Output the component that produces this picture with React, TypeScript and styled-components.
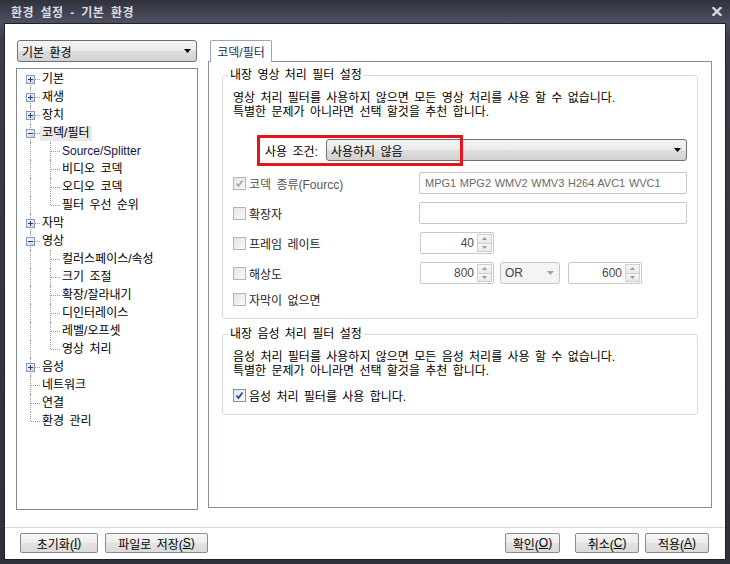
import React from 'react';
import styled, { createGlobalStyle, css } from 'styled-components';

const GlobalStyle = createGlobalStyle`
  html, body { margin: 0; padding: 0; background: #2b2d35; }
  body {
    font-family: "Liberation Sans", "Noto Sans CJK KR", sans-serif;
    font-size: 12px;
    word-spacing: 2px;
    color: #000;
  }
  * { box-sizing: border-box; }
`;

const Window = styled.div`
  width: 730px;
  height: 564px;
  display: flex;
  flex-direction: column;
  padding: 0 4px 4px 4px;
  background: linear-gradient(#30323b 0px, #4c4f60 22px, #3a3c47 40px, #2f3139 100%);
`;

const TitleBar = styled.div`
  height: 23px;
  display: flex;
  align-items: center;
  justify-content: space-between;
  padding: 0 4px 1px 7px;
`;

const TitleText = styled.div`
  color: #dcdde2;
  font-weight: bold;
  font-size: 12px;
  letter-spacing: 0.4px;
  word-spacing: 3px;
`;

const Body = styled.div`
  flex: 1;
  display: flex;
  flex-direction: column;
  background: #fff;
  border: 1px solid #1f2026;
`;

const Main = styled.div`
  height: 503px;
  display: flex;
  gap: 10px;
  padding: 16px 13px 17px 11px;
`;

const LeftColumn = styled.div`
  width: 182px;
  display: flex;
  flex-direction: column;
`;

const ComboBox = styled.div<{ $disabled?: boolean; $width?: number }>`
  height: 22px;
  display: flex;
  align-items: center;
  justify-content: space-between;
  padding: 0 5px 0 4px;
  border: 1px solid #707070;
  border-radius: 3px;
  background: linear-gradient(#f3f3f3, #ebebeb 50%, #dddddd 51%, #d2d2d2);
  ${p => p.$width && css`width: ${p.$width}px;`}
  ${p => p.$disabled && css`
    border-color: #c6c6c6;
    background: #f4f4f4;
    color: #444;
  `}
`;

const LeftCombo = styled(ComboBox)`
  margin: 0 1px;
`;

const Tree = styled.div`
  flex: 1;
  margin-top: 6px;
  border: 1px solid #828790;
  padding: 1px 0 0 3px;
  display: flex;
  flex-direction: column;
`;

const TreeRow = styled.div`
  height: 18px;
  display: flex;
  align-items: center;
`;

type Vert = 'full' | 'top' | 'bottom' | 'none';

const GuideCell = styled.div<{ $vert: Vert; $horiz?: boolean }>`
  position: relative;
  width: 20px;
  height: 18px;
  display: flex;
  align-items: center;
  justify-content: center;
  &::before {
    content: '';
    position: absolute;
    left: 10px;
    width: 0;
    border-left: 1px dotted #9a9a9a;
    top: ${p => (p.$vert === 'bottom' ? '9px' : '0')};
    bottom: ${p => (p.$vert === 'top' ? '9px' : '0')};
    display: ${p => (p.$vert === 'none' ? 'none' : 'block')};
  }
  &::after {
    content: '';
    position: absolute;
    left: 11px;
    right: 0;
    top: 9px;
    border-top: 1px dotted #9a9a9a;
    display: ${p => (p.$horiz ? 'block' : 'none')};
  }
`;

const Expander = styled.svg`
  position: relative;
  z-index: 1;
  margin-left: 1px;
`;

const TreeLabel = styled.span<{ $selected?: boolean; $latin?: boolean }>`
  padding: 0 2px;
  height: 15px;
  line-height: 15px;
  white-space: nowrap;
  color: ${p => (p.$latin ? '#14144a' : '#000')};
  ${p => p.$selected && css`background: #e9e9e9;`}
`;

const RightColumn = styled.div`
  width: 504px;
  display: flex;
  flex-direction: column;
  padding-bottom: 2px;
`;

const TabStrip = styled.div`
  display: flex;
  padding-left: 2px;
`;

const Tab = styled.div`
  position: relative;
  z-index: 1;
  width: 62px;
  height: 22px;
  margin-bottom: -1px;
  border: 1px solid #9aa5bd;
  border-bottom: none;
  border-radius: 2px 2px 0 0;
  background: #fff;
  color: #22305e;
  display: flex;
  align-items: center;
  justify-content: center;
  font-size: 12px;
  word-spacing: 0;
`;

const TabPanel = styled.div`
  flex: 1;
  border: 1px solid #8d9097;
  padding: 6px 13px 0 13px;
`;

const Group = styled.fieldset<{ $mt: number; $pb: number }>`
  margin: ${p => p.$mt}px 0 0 0;
  padding: 0 10px ${p => p.$pb}px 10px;
  border: 1px solid #d3dbe4;
  border-radius: 3px;
  min-width: 0;
`;

const Legend = styled.legend`
  padding: 0 2px;
  margin-left: -5px;
  line-height: 15px;
`;

const Desc = styled.div`
  margin-top: 8px;
  line-height: 14px;
  white-space: nowrap;
`;

const UsageRow = styled.div`
  position: relative;
  margin-top: 20px;
  display: flex;
  align-items: center;
  gap: 4px;
  padding-left: 32px;
`;

const UsageLabel = styled.span`
  width: 57px;
  white-space: nowrap;
`;

const UsageCombo = styled(ComboBox)`
  flex: 1;
`;

const Highlight = styled.div`
  position: absolute;
  left: 24px;
  top: -4px;
  width: 206px;
  height: 31px;
  border: 3px solid #e8141c;
  pointer-events: none;
`;

const FormGrid = styled.div`
  margin-top: 11px;
  display: grid;
  grid-template-columns: 186px 1fr;
  row-gap: 8px;
  align-items: center;
`;

const CheckLabel = styled.label<{ $color?: string }>`
  display: flex;
  align-items: center;
  gap: 3px;
  height: 15px;
  color: ${p => p.$color || '#222'};
  white-space: nowrap;
`;

const Box = styled.span<{ $enabled?: boolean }>`
  width: 13px;
  height: 13px;
  flex: none;
  display: flex;
  align-items: center;
  justify-content: center;
  border: 1px solid ${p => (p.$enabled ? '#8295ad' : '#b4b4b4')};
  background: ${p => (p.$enabled ? 'linear-gradient(135deg, #dfe6ef, #fbfcfd)' : 'linear-gradient(135deg, #e4e4e4, #fafafa)')};
`;

const TextInput = styled.div`
  height: 22px;
  display: flex;
  align-items: center;
  padding: 0 5px;
  border: 1px solid #c8c8c8;
  border-radius: 2px;
  color: #6a6a6a;
  font-size: 11px;
  word-spacing: 0.6px;
  white-space: nowrap;
  overflow: hidden;
`;

const ControlRow = styled.div`
  display: flex;
  align-items: center;
  gap: 6px;
`;

const Spin = styled.div<{ $ml?: number }>`
  width: 74px;
  height: 22px;
  display: flex;
  border: 1px solid #c8c8c8;
  border-radius: 2px;
  margin-left: ${p => p.$ml ?? 0}px;
`;

const SpinValue = styled.div`
  flex: 1;
  display: flex;
  align-items: center;
  justify-content: flex-end;
  padding-right: 2px;
  color: #4a4a4a;
`;

const SpinButtons = styled.div`
  width: 15px;
  margin: 1px;
  display: flex;
  flex-direction: column;
`;

const SpinButton = styled.div`
  flex: 1;
  display: flex;
  align-items: center;
  justify-content: center;
  border: 1px solid #cfcfcf;
  background: linear-gradient(#f8f8f8, #e8e8e8);
  & + & { margin-top: -1px; }
`;

const CheckRowSingle = styled.div`
  margin-top: 10px;
`;

const Footer = styled.div`
  flex: 1;
  border-top: 1px solid #dadada;
  display: flex;
  justify-content: space-between;
  padding: 5px 16px 0 15px;
`;

const ButtonGroup = styled.div<{ $gap: number }>`
  display: flex;
  gap: ${p => p.$gap}px;
`;

const Button = styled.div<{ $w: number; $mr?: number }>`
  width: ${p => p.$w}px;
  height: 20px;
  margin-right: ${p => p.$mr ?? 0}px;
  display: flex;
  align-items: center;
  justify-content: center;
  border: 1px solid #8a8a8a;
  border-radius: 2px;
  background: linear-gradient(#f7f7f7, #ececec 50%, #e2e2e2 51%, #dadada);
  white-space: nowrap;
  & u { text-decoration: underline; }
`;

const Arrow = ({ color = '#000' }: { color?: string }) => (
  <svg width="7" height="4" viewBox="0 0 7 4"><polygon points="0,0 7,0 3.5,4" fill={color} /></svg>
);

const Tri = ({ up }: { up?: boolean }) => (
  <svg width="5" height="3" viewBox="0 0 5 3">
    <polygon points={up ? '0,3 5,3 2.5,0' : '0,0 5,0 2.5,3'} fill="#9a9a9a" />
  </svg>
);

const ExpanderIcon = ({ open }: { open?: boolean }) => (
  <Expander width="9" height="9" viewBox="0 0 9 9">
    <defs>
      <linearGradient id={open ? 'eo' : 'ec'} x1="0" y1="0" x2="1" y2="1">
        <stop offset="0" stopColor="#ffffff" />
        <stop offset="1" stopColor="#c9d0da" />
      </linearGradient>
    </defs>
    <rect x="0.5" y="0.5" width="8" height="8" fill={`url(#${open ? 'eo' : 'ec'})`} stroke="#8a99b1" />
    <line x1="2" y1="4.5" x2="7" y2="4.5" stroke="#1f3c86" strokeWidth="1" />
    {!open && <line x1="4.5" y1="2" x2="4.5" y2="7" stroke="#1f3c86" strokeWidth="1" />}
  </Expander>
);

const CheckMark = ({ color }: { color: string }) => (
  <svg width="9" height="9" viewBox="0 0 9 9">
    <polyline points="1.5,4.5 3.5,7 7.5,1.5" fill="none" stroke={color} strokeWidth="1.8" />
  </svg>
);

const Checkbox = ({ checked, enabled, color, children }: { checked?: boolean; enabled?: boolean; color?: string; children: React.ReactNode }) => (
  <CheckLabel $color={color}>
    <Box $enabled={enabled}>{checked && <CheckMark color={enabled ? '#2a4c9c' : '#a9a9a9'} />}</Box>
    {children}
  </CheckLabel>
);

const SpinBox = ({ value, ml }: { value: string; ml?: number }) => (
  <Spin $ml={ml}>
    <SpinValue>{value}</SpinValue>
    <SpinButtons>
      <SpinButton><Tri up /></SpinButton>
      <SpinButton><Tri /></SpinButton>
    </SpinButtons>
  </Spin>
);

type Node = { label: string; open?: boolean; selected?: boolean; latin?: boolean; children?: Node[]; expandable?: boolean };

const tree: Node[] = [
  { label: '기본', expandable: true },
  { label: '재생', expandable: true },
  { label: '장치', expandable: true },
  {
    label: '코덱/필터', expandable: true, open: true, selected: true,
    children: [{ label: 'Source/Splitter', latin: true }, { label: '비디오 코덱' }, { label: '오디오 코덱' }, { label: '필터 우선 순위' }],
  },
  { label: '자막', expandable: true },
  {
    label: '영상', expandable: true, open: true,
    children: [
      { label: '컬러스페이스/속성' }, { label: '크기 조절' }, { label: '확장/잘라내기' },
      { label: '디인터레이스' }, { label: '레벨/오프셋' }, { label: '영상 처리' },
    ],
  },
  { label: '음성', expandable: true },
  { label: '네트워크' },
  { label: '연결' },
  { label: '환경 관리' },
];

const TreeView = () => {
  const rows: React.ReactNode[] = [];
  tree.forEach((n, i) => {
    const vert: Vert = i === 0 ? 'bottom' : i === tree.length - 1 ? 'top' : 'full';
    rows.push(
      <TreeRow key={n.label}>
        <GuideCell $vert={vert} $horiz>
          {n.expandable && <ExpanderIcon open={n.open} />}
        </GuideCell>
        <TreeLabel $selected={n.selected}>{n.label}</TreeLabel>
      </TreeRow>
    );
    if (n.open && n.children) {
      n.children.forEach((c, j) => {
        rows.push(
          <TreeRow key={n.label + c.label}>
            <GuideCell $vert="full" />
            <GuideCell $vert={j === n.children!.length - 1 ? 'top' : 'full'} $horiz />
            <TreeLabel $latin={c.latin}>{c.label}</TreeLabel>
          </TreeRow>
        );
      });
    }
  });
  return <Tree>{rows}</Tree>;
};

export default function App() {
  return (
    <>
      <GlobalStyle />
      <Window>
        <TitleBar>
          <TitleText>환경 설정 - 기본 환경</TitleText>
          <svg width="10" height="9" viewBox="0 0 10 9">
            <path d="M1.5 1 L8.5 8 M8.5 1 L1.5 8" stroke="#d6d7dc" strokeWidth="2.4" strokeLinecap="square" />
          </svg>
        </TitleBar>
        <Body>
          <Main>
            <LeftColumn>
              <LeftCombo>
                <span>기본 환경</span>
                <Arrow />
              </LeftCombo>
              <TreeView />
            </LeftColumn>
            <RightColumn>
              <TabStrip>
                <Tab>코덱/필터</Tab>
              </TabStrip>
              <TabPanel>
                <Group $mt={0} $pb={11}>
                  <Legend>내장 영상 처리 필터 설정</Legend>
                  <Desc>
                    영상 처리 필터를 사용하지 않으면 모든 영상 처리를 사용 할 수 없습니다.
                    <br />
                    특별한 문제가 아니라면 선택 할것을 추천 합니다.
                  </Desc>
                  <UsageRow>
                    <UsageLabel>사용 조건:</UsageLabel>
                    <UsageCombo>
                      <span>사용하지 않음</span>
                      <Arrow />
                    </UsageCombo>
                    <Highlight />
                  </UsageRow>
                  <FormGrid>
                    <Checkbox checked color="#555">코덱 종류(Fourcc)</Checkbox>
                    <TextInput>MPG1 MPG2 WMV2 WMV3 H264 AVC1 WVC1</TextInput>
                    <Checkbox>확장자</Checkbox>
                    <TextInput />
                    <Checkbox>프레임 레이트</Checkbox>
                    <ControlRow>
                      <SpinBox value="40" ml={1} />
                    </ControlRow>
                    <Checkbox>해상도</Checkbox>
                    <ControlRow>
                      <SpinBox value="800" ml={1} />
                      <ComboBox $disabled $width={60}>
                        <span>OR</span>
                        <Arrow color="#a0a0a0" />
                      </ComboBox>
                      <SpinBox value="600" ml={2} />
                    </ControlRow>
                    <Checkbox>자막이 없으면</Checkbox>
                  </FormGrid>
                </Group>
                <Group $mt={8} $pb={11}>
                  <Legend>내장 음성 처리 필터 설정</Legend>
                  <Desc>
                    음성 처리 필터를 사용하지 않으면 모든 음성 처리를 사용 할 수 없습니다.
                    <br />
                    특별한 문제가 아니라면 선택 할것을 추천 합니다.
                  </Desc>
                  <CheckRowSingle>
                    <Checkbox checked enabled color="#000">음성 처리 필터를 사용 합니다.</Checkbox>
                  </CheckRowSingle>
                </Group>
              </TabPanel>
            </RightColumn>
          </Main>
          <Footer>
            <ButtonGroup $gap={7}>
              <Button $w={78}>초기화(<u>I</u>)</Button>
              <Button $w={103}>파일로 저장(<u>S</u>)</Button>
            </ButtonGroup>
            <ButtonGroup $gap={0}>
              <Button $w={55} $mr={15}>확인(<u>O</u>)</Button>
              <Button $w={64} $mr={6}>취소(<u>C</u>)</Button>
              <Button $w={64}>적용(<u>A</u>)</Button>
            </ButtonGroup>
          </Footer>
        </Body>
      </Window>
    </>
  );
}
